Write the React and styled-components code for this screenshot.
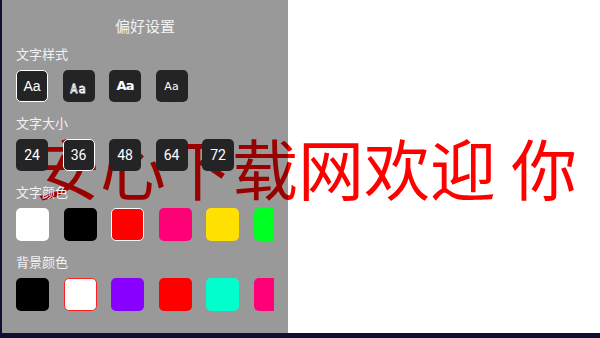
import React, { useState } from "react";
import styled, { createGlobalStyle, css } from "styled-components";

const GlobalStyle = createGlobalStyle`
  html, body {
    margin: 0;
    padding: 0;
    background: #0e1033;
  }
  * {
    box-sizing: border-box;
  }
`;

const Frame = styled.div`
  width: 600px;
  height: 338px;
  padding: 0 0 5px 2px;
  background: #0e1033;
`;

const Screen = styled.div`
  position: relative;
  height: 100%;
  background: #fff;
  overflow: hidden;
  display: flex;
  align-items: center;
  justify-content: center;
  padding-left: 9px;
`;

const Greeting = styled.div`
  font-family: "Noto Sans CJK SC", "Noto Sans", sans-serif;
  font-size: 66px;
  line-height: 1;
  color: #ff0000;
  white-space: pre;
  margin-top: -2px;
`;

const Drawer = styled.div`
  position: absolute;
  left: 0;
  top: 0;
  bottom: 0;
  width: 286px;
  background: rgba(0, 0, 0, 0.4);
  padding: 14px 14px 0;
  font-family: "Noto Sans CJK SC", "Noto Sans", sans-serif;
  color: #f2f2f2;
`;

const Title = styled.div`
  text-align: center;
  font-size: 15px;
  line-height: 24px;
`;

const Label = styled.div`
  font-size: 13px;
  line-height: 18px;
  margin-top: ${(p) => (p.$first ? 7 : 12)}px;
  margin-bottom: 7px;
`;

const Row = styled.div`
  display: flex;
  gap: 14.5px;
  overflow: hidden;
  height: ${(p) => p.$h || 32}px;
`;

const Tile = styled.div`
  flex: 0 0 auto;
  width: ${(p) => p.$size || 32}px;
  height: ${(p) => p.$size || 32}px;
  border-radius: 5px;
  display: flex;
  align-items: center;
  justify-content: center;
  cursor: pointer;
`;

const DarkTile = styled(Tile)`
  background: #242426;
  color: #fff;
  font-family: Roboto, "Liberation Sans", sans-serif;
  font-size: 14px;
  border: ${(p) => (p.$active ? "1.5px solid #fff" : "none")};
`;

const styles = [
  css`
    font-family: "Liberation Sans", sans-serif;
    font-size: 14px;
  `,
  css`
    font-family: "DejaVu Sans Mono", monospace;
    font-size: 12px;
    color: transparent;
    -webkit-text-stroke: 0.8px #fff;
    padding-top: 5px;
    letter-spacing: 1px;
  `,
  css`
    font-family: "DejaVu Sans", sans-serif;
    font-weight: 600;
    font-size: 13px;
    letter-spacing: -1px;
    padding-bottom: 2px;
  `,
  css`
    font-family: "DejaVu Sans", sans-serif;
    font-size: 11px;
    color: #fff;
  `,
];

const Glyph = styled.span`
  ${(p) => styles[p.$kind]}
`;

const Swatch = styled(Tile)`
  background: ${(p) => p.$color};
  border: ${(p) => (p.$ring ? `1.5px solid ${p.$ring}` : "none")};
`;

const sizes = [24, 36, 48, 64, 72];
const textColors = ["#ffffff", "#000000", "#ff0000", "#ff0077", "#ffe000", "#00ff22", "#00aaff"];
const bgColors = ["#000000", "#ffffff", "#8800ff", "#ff0000", "#00ffcc", "#ff0077", "#ffe000"];

export default function App() {
  const [font, setFont] = useState(0);
  const [size, setSize] = useState(36);
  const [textColor, setTextColor] = useState("#ff0000");
  const [bgColor, setBgColor] = useState("#ffffff");

  return (
    <>
      <GlobalStyle />
      <Frame>
        <Screen>
          <Greeting>{"安心下载网欢迎 你"}</Greeting>
          <Drawer>
            <Title>偏好设置</Title>

            <Label $first>文字样式</Label>
            <Row>
              {[0, 1, 2, 3].map((k) => (
                <DarkTile key={k} $active={font === k} onClick={() => setFont(k)}>
                  <Glyph $kind={k}>Aa</Glyph>
                </DarkTile>
              ))}
            </Row>

            <Label>文字大小</Label>
            <Row>
              {sizes.map((s) => (
                <DarkTile key={s} $active={size === s} onClick={() => setSize(s)}>
                  {s}
                </DarkTile>
              ))}
            </Row>

            <Label>文字颜色</Label>
            <Row $h={33}>
              {textColors.map((c) => (
                <Swatch
                  key={c}
                  $size={33}
                  $color={c}
                  $ring={textColor === c ? "#fff" : null}
                  onClick={() => setTextColor(c)}
                />
              ))}
            </Row>

            <Label>背景颜色</Label>
            <Row $h={33}>
              {bgColors.map((c) => (
                <Swatch
                  key={c}
                  $size={33}
                  $color={c}
                  $ring={bgColor === c ? "#ff2020" : null}
                  onClick={() => setBgColor(c)}
                />
              ))}
            </Row>
          </Drawer>
        </Screen>
      </Frame>
    </>
  );
}
